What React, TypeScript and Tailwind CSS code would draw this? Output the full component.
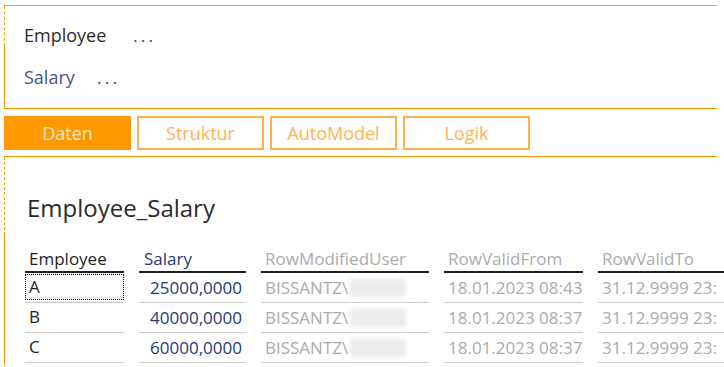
import React from 'react'

const rows = [
  { emp: 'A', sal: '25000,0000', from: '18.01.2023 08:43' },
  { emp: 'B', sal: '40000,0000', from: '18.01.2023 08:37' },
  { emp: 'C', sal: '60000,0000', from: '18.01.2023 08:37' },
]

const tabs = ['Daten', 'Struktur', 'AutoModel', 'Logik']

function LeftEdge({ dashed }: { dashed: number }) {
  return (
    <div className="flex flex-col w-px shrink-0">
      <div className="border-l border-dashed border-[#ff9900]" style={{ height: dashed }} />
      <div className="flex-1 border-l border-[#ff9900]" />
    </div>
  )
}

export default function App() {
  return (
    <div
      className="w-[724px] h-[367px] overflow-hidden bg-white pl-[4px] pt-[5px] flex flex-col"
      style={{ fontFamily: '"Open Sans", "Noto Sans", sans-serif' }}
    >
      {/* filter panel */}
      <div className="flex shrink-0 w-[713px] h-[104px] border-y border-[#ff9900]">
        <LeftEdge dashed={40} />
        <div className="flex flex-col pl-[19px] pt-[17px] gap-[18px] text-[18px]">
          <div className="flex items-center h-[24px]">
            <span className="text-[#2b2b2b] w-[109px]">Employee</span>
            <span className="text-[#555] tracking-[3px]">...</span>
          </div>
          <div className="flex items-center h-[24px]">
            <span className="text-[#47558a] w-[73px]">Salary</span>
            <span className="text-[#555] tracking-[3px]">...</span>
          </div>
        </div>
      </div>

      {/* tabs */}
      <div className="flex shrink-0 gap-[6px] mt-[7px]">
        {tabs.map((t, i) => (
          <div
            key={t}
            className={
              i === 0
                ? 'w-[127px] h-[34px] flex items-center justify-center bg-[#ff9900] text-[#ffe6c2] text-[18px]'
                : 'w-[127px] h-[34px] flex items-center justify-center border-2 border-[#ffb04a] text-[#ffb257] text-[18px]'
            }
          >
            {t}
          </div>
        ))}
      </div>

      {/* content panel */}
      <div className="flex shrink-0 w-[713px] h-[209px] mt-[6px] border-t border-[#ff9900]">
        <LeftEdge dashed={78} />
        <div className="flex flex-col pl-[20px]">
          <div className="shrink-0 pl-[2px] pt-[36px] h-[88px] text-[24px] text-[#2b2b2b] leading-[30px]">
            Employee_Salary
          </div>
          <div className="grid shrink-0 grid-cols-[99px_107px_168px_139px_140px] gap-x-[15px] text-[17px] leading-[22px]">
            <div className="h-[28px] pt-[3px] border-b-2 border-[#222] pl-[4px] text-[#1f1f1f]">Employee</div>
            <div className="h-[28px] pt-[3px] border-b-2 border-[#222] pl-[5px] text-[#233a7a]">Salary</div>
            <div className="h-[28px] pt-[3px] border-b-2 border-[#222] pl-[4px] text-[#ababab]">RowModifiedUser</div>
            <div className="h-[28px] pt-[3px] border-b-2 border-[#222] pl-[4px] text-[#ababab]">RowValidFrom</div>
            <div className="h-[28px] pt-[3px] border-b-2 border-[#222] pl-[4px] text-[#ababab] whitespace-nowrap">RowValidTo</div>
            {rows.map((r, i) => (
              <React.Fragment key={r.emp}>
                <div className="h-[30px] border-b border-[#cfcfcf] pt-px">
                  <div
                    className={
                      i === 0
                        ? 'h-[26px] border border-dotted border-black pl-[3px] text-[#1f1f1f] flex items-center'
                        : 'h-[26px] pl-[4px] text-[#1f1f1f] flex items-center'
                    }
                  >
                    {r.emp}
                  </div>
                </div>
                <div className="h-[30px] border-b border-[#cfcfcf] pr-[4px] text-right text-[#233a7a] flex items-center justify-end">
                  {r.sal}
                </div>
                <div className="h-[30px] border-b border-[#cfcfcf] pl-[4px] text-[#ababab] flex items-center">
                  BISSANTZ\
                  <span className="ml-[2px] w-[56px] h-[18px] bg-[#ececec] blur-[2px]" />
                </div>
                <div className="h-[30px] border-b border-[#cfcfcf] pl-[4px] text-[#ababab] flex items-center whitespace-nowrap">
                  {r.from}
                </div>
                <div className="h-[30px] border-b border-[#cfcfcf] pl-[4px] text-[#ababab] flex items-center whitespace-nowrap">
                  31.12.9999 23:
                </div>
              </React.Fragment>
            ))}
          </div>
        </div>
      </div>
    </div>
  )
}
